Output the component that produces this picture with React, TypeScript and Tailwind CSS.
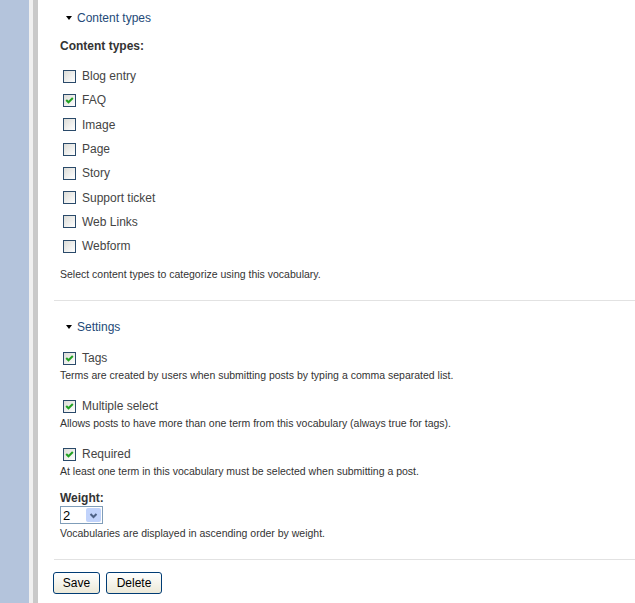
import React from "react";

const contentTypes = [
  { label: "Blog entry", checked: false },
  { label: "FAQ", checked: true },
  { label: "Image", checked: false },
  { label: "Page", checked: false },
  { label: "Story", checked: false },
  { label: "Support ticket", checked: false },
  { label: "Web Links", checked: false },
  { label: "Webform", checked: false },
];

const settings = [
  {
    label: "Tags",
    desc: "Terms are created by users when submitting posts by typing a comma separated list.",
    mt: "mt-[14px]",
  },
  {
    label: "Multiple select",
    desc: "Allows posts to have more than one term from this vocabulary (always true for tags).",
    mt: "mt-[15px]",
  },
  {
    label: "Required",
    desc: "At least one term in this vocabulary must be selected when submitting a post.",
    mt: "mt-[15px]",
  },
];

const Checkbox = ({ checked }: { checked: boolean }) => (
  <span className="inline-flex h-[13px] w-[13px] shrink-0 items-center justify-center border border-[#2a4a6a] bg-linear-to-br from-[#dcdcd7] to-white">
    {checked && (
      <svg width="11" height="11" viewBox="0 0 11 11">
        <polyline
          points="2.2,5 4.5,7.3 8.8,3"
          fill="none"
          stroke="#21a121"
          strokeWidth="2"
        />
      </svg>
    )}
  </span>
);

const Legend = ({ text }: { text: string }) => (
  <div className="flex h-4 items-center pl-[12px] text-[12px] text-[#244a78]">
    <span className="mr-[5px] h-0 w-0 border-x-[3.5px] border-t-[4px] border-x-transparent border-t-black" />
    <span>{text}</span>
  </div>
);

const Desc = ({ children, className = "" }: { children: React.ReactNode; className?: string }) => (
  <p className={"pl-[6px] text-[10.5px] leading-[13px] text-[#333] " + className}>{children}</p>
);

export default function App() {
  return (
    <div className="flex min-h-[603px] font-['Liberation_Sans',Arial,sans-serif]">
      <div className="w-[29px] bg-[#b4c4dc]" />
      <div className="w-[4px] bg-[#f0f0f0]" />
      <div className="w-[5px] bg-[#c9c9c9]" />
      <div className="flex-1 bg-white pl-[16px]">
        {/* content types */}
        <div className="border-b border-[#e2e2e2] pt-[10px] pb-[19px]">
          <Legend text="Content types" />
          <div className="mt-[12px] h-4 pl-[6px] text-[12px] leading-4 font-bold text-[#333]">
            Content types:
          </div>
          <div className="mt-[10px]">
            {contentTypes.map((c) => (
              <div key={c.label} className="flex h-[24.3px] items-center pl-[9px]">
                <Checkbox checked={c.checked} />
                <span className="ml-[6px] text-[12px] text-[#444]">{c.label}</span>
              </div>
            ))}
          </div>
          <Desc className="mt-[10px]">Select content types to categorize using this vocabulary.</Desc>
        </div>

        {/* settings */}
        <div className="border-b border-[#e2e2e2] pt-[18px] pb-[19px]">
          <Legend text="Settings" />
          {settings.map((s) => (
            <div key={s.label} className={s.mt}>
              <div className="flex h-[18px] items-center pl-[9px]">
                <Checkbox checked />
                <span className="ml-[6px] text-[12px] text-[#444]">{s.label}</span>
              </div>
              <Desc className="mt-[2px]">{s.desc}</Desc>
            </div>
          ))}
          <div className="mt-[12px] h-4 pl-[6px] text-[12px] leading-4 font-bold text-[#333]">
            Weight:
          </div>
          <div className="ml-[6px] flex h-[18px] w-[43px] items-center border border-[#7f9db9] bg-white">
            <span className="flex-1 pl-[2px] text-[13px] leading-none text-black">2</span>
            <span className="mr-[1px] flex h-[14px] w-[15px] items-center justify-center rounded-[2px] bg-[#c1d3fb]">
              <svg width="9" height="7" viewBox="0 0 9 7">
                <polyline points="1.5,2 4.5,5 7.5,2" fill="none" stroke="#4d6185" strokeWidth="2" />
              </svg>
            </span>
          </div>
          <Desc className="mt-[3px]">Vocabularies are displayed in ascending order by weight.</Desc>
        </div>

        <div className="mt-[12px] flex gap-[6px]">
          <button className="-ml-[1px] h-[22px] w-[47px] rounded-[3px] border border-[#003c74] bg-linear-to-b from-white to-[#ece9d8] text-[12px] text-black">
            Save
          </button>
          <button className="h-[22px] w-[56px] rounded-[3px] border border-[#003c74] bg-linear-to-b from-white to-[#ece9d8] text-[12px] text-black">
            Delete
          </button>
        </div>
      </div>
    </div>
  );
}
